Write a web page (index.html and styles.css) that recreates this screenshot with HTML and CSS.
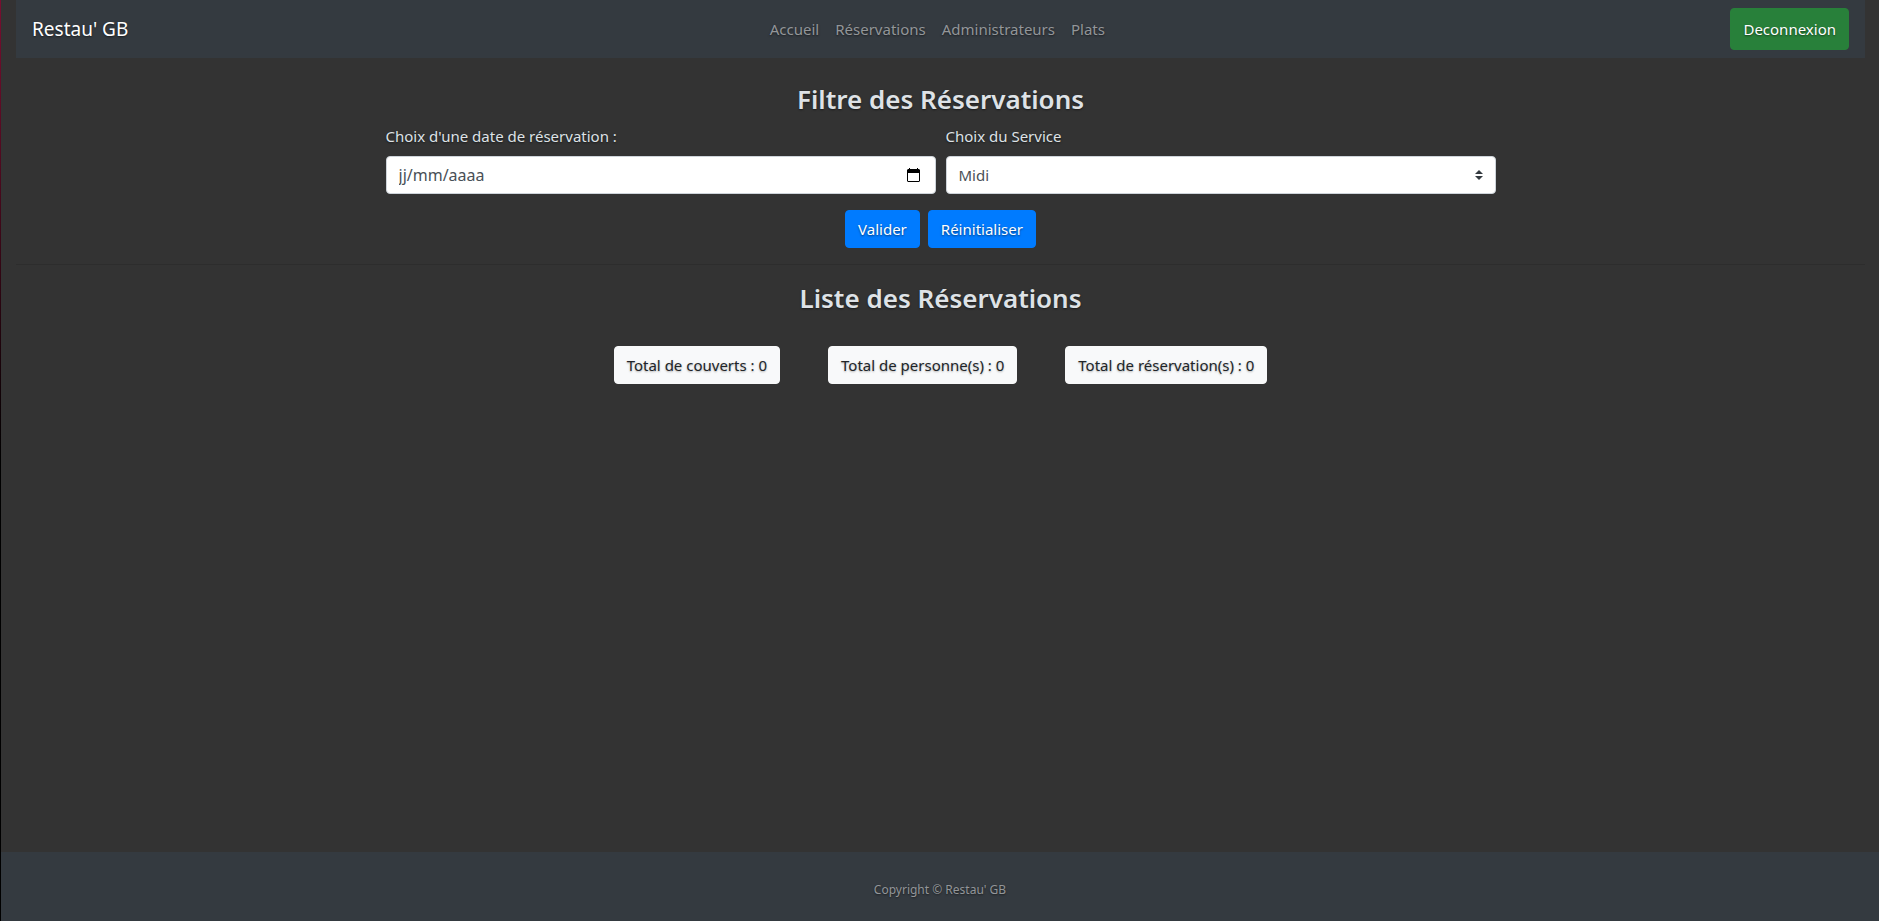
FILE: index.html
```html
<!DOCTYPE html>
<html lang="fr">
<head>
<meta charset="utf-8">
<title>Restau' GB</title>
<link rel="stylesheet" href="styles.css">
</head>
<body>
<div class="page">
  <header class="container">
    <nav class="navbar">
      <a class="brand" href="#">Restau' GB</a>
      <ul class="nav-links">
        <li><a href="#">Accueil</a></li>
        <li><a href="#">Réservations</a></li>
        <li><a href="#">Administrateurs</a></li>
        <li><a href="#">Plats</a></li>
      </ul>
      <button class="btn btn-success" type="button">Deconnexion</button>
    </nav>
  </header>
  <main class="container content">
    <h1 class="title">Filtre des Réservations</h1>
    <form class="filter">
      <div class="fields">
        <div class="field">
          <label for="date">Choix d'une date de réservation :</label>
          <div class="control">
            <input class="input input-date" id="date" type="text" placeholder="jj/mm/aaaa">
            <button class="picker" type="button" aria-label="Ouvrir le calendrier">
              <svg width="13" height="14" viewBox="0 0 13 14"><path fill="#000" fill-rule="evenodd" d="M2 0h1v1h7V0h1v1h1l1 1v11l-1 1H1l-1-1V2l1-1h1zM1 5v8h11V5z"/></svg>
            </button>
          </div>
        </div>
        <div class="field">
          <label for="service">Choix du Service</label>
          <div class="control">
            <select class="input" id="service"><option>Midi</option><option>Soir</option></select>
            <svg class="arrows" width="8" height="10" viewBox="0 0 4 5"><path fill="#343a40" d="M2 0L0 2h4zm0 5L0 3h4z"/></svg>
          </div>
        </div>
      </div>
      <div class="actions">
        <button class="btn btn-primary" type="submit">Valider</button>
        <button class="btn btn-primary" type="reset">Réinitialiser</button>
      </div>
    </form>
    <hr class="rule">
    <h2 class="title">Liste des Réservations</h2>
    <div class="totals">
      <button class="btn btn-light" type="button">Total de couverts : 0</button>
      <button class="btn btn-light" type="button">Total de personne(s) : 0</button>
      <button class="btn btn-light" type="button">Total de réservation(s) : 0</button>
    </div>
  </main>
  <footer class="footer">Copyright © Restau' GB</footer>
</div>
</body>
</html>
```
FILE: styles.css
```css
* { box-sizing: border-box; }
body {
  margin: 0;
  background: #333;
  color: #dee2e6;
  font: 15px/24px "Noto Sans", "Open Sans", sans-serif;
  text-shadow: 0 1px 2px rgba(0, 0, 0, .5);
}
.page {
  display: flex;
  flex-direction: column;
  min-height: 100vh;
  border-left: 1px solid;
  border-image: linear-gradient(#7a0f30, #000 50%) 1;
}
.container { padding: 0 14px 0 15px; }
.navbar {
  display: flex;
  align-items: center;
  justify-content: space-between;
  padding: 8px 16px;
  background: #343a40;
}
.brand { margin-right: 16px; color: #fff; font-size: 19px; text-decoration: none; }
.nav-links { display: flex; gap: 16px; margin: 0; padding: 0; list-style: none; }
.nav-links a { color: #939699; text-decoration: none; }
.btn {
  padding: 6px 12px;
  border: 1px solid;
  border-radius: 4px;
  font: inherit;
  text-shadow: inherit;
}
.btn-success { padding: 8px 12px; color: #fff; background: #28803a; border-color: #28803a; }
.btn-primary { color: #fff; background: #007bff; border-color: #007bff; }
.btn-light {
  color: #212529;
  background: #f8f9fa;
  border-color: #f8f9fa;
  text-shadow: 0 1px 2px rgba(0, 0, 0, .3);
}
.content { flex: 1; padding-top: 24px; }
.title {
  margin: 0 0 8px;
  font-size: 26px;
  line-height: 34px;
  font-weight: 600;
  text-align: center;
}
.filter { max-width: 1110px; margin: 0 auto; }
.fields { display: grid; grid-template-columns: 1fr 1fr; gap: 10px; }
.field label { display: block; margin-bottom: 8px; }
.control { position: relative; }
.input {
  display: block;
  width: 100%;
  height: 38px;
  padding: 6px 12px;
  border: 1px solid #ced4da;
  border-radius: 4px;
  background: #fff;
  color: #495057;
  font: inherit;
  text-shadow: none;
  appearance: none;
}
.input-date { font-size: 16px; }
.input::placeholder { color: #495057; opacity: 1; }
.picker {
  position: absolute;
  top: 12px;
  right: 16px;
  display: flex;
  padding: 0;
  border: 0;
  background: none;
}
.arrows { position: absolute; top: 14px; right: 13px; pointer-events: none; }
.actions { display: flex; justify-content: center; gap: 8px; margin-top: 16px; }
.rule { margin: 16px 0; border: 0; border-top: 1px solid rgba(0, 0, 0, .1); }
.totals { display: flex; justify-content: center; gap: 48px; margin-top: 31px; }
.footer {
  padding: 26px 16px 19px;
  background: #343a40;
  color: #939699;
  font-size: 12px;
  text-align: center;
}
```
